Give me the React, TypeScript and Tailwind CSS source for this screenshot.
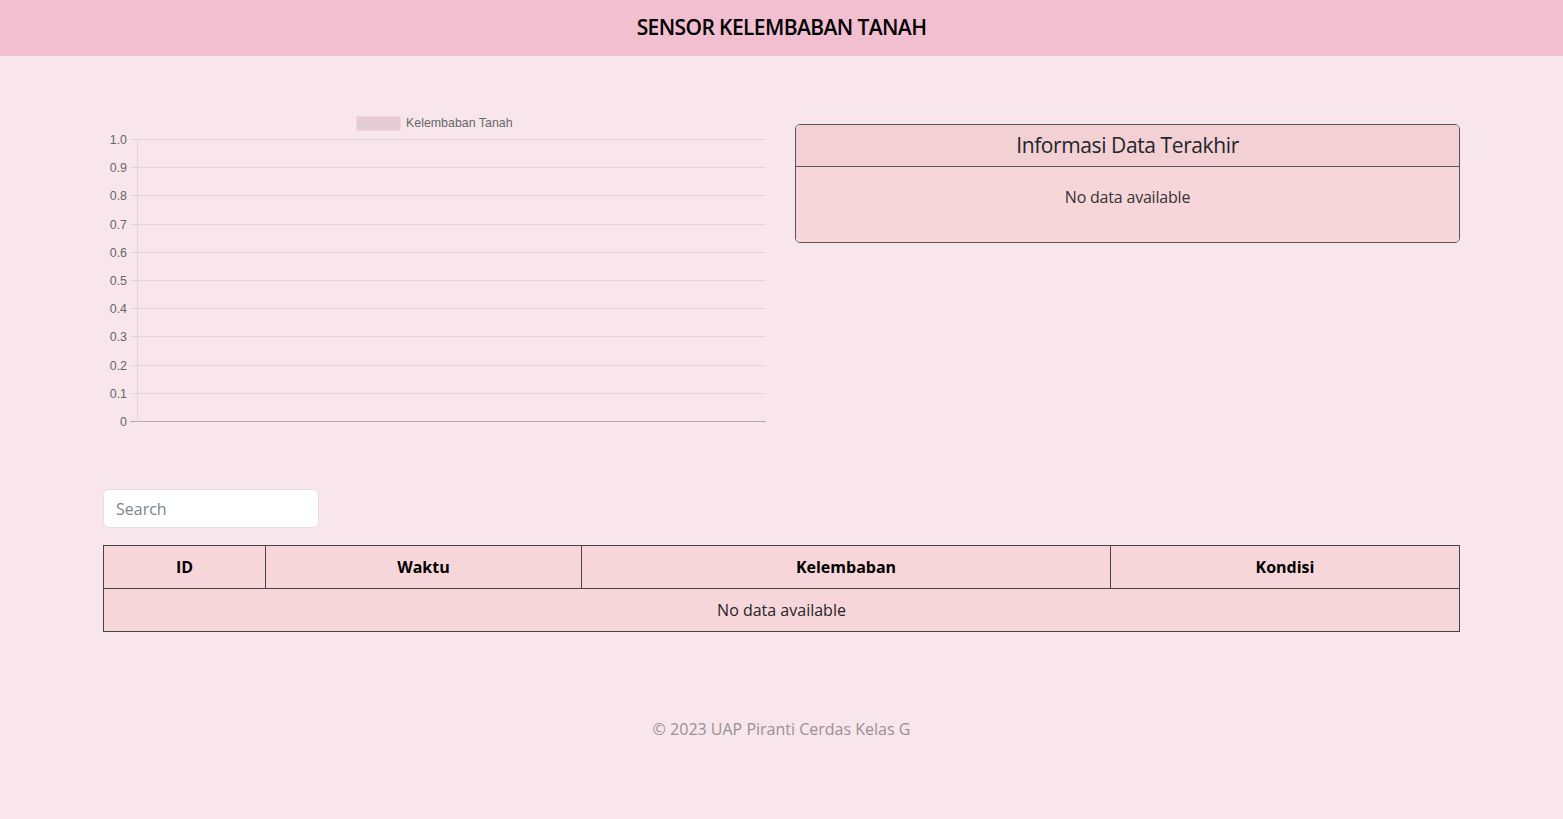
import React from "react";

const ticks = ["1.0", "0.9", "0.8", "0.7", "0.6", "0.5", "0.4", "0.3", "0.2", "0.1", "0"];

function Chart() {
  const top = 140 - 110;
  const step = 28.2;
  return (
    <svg width="663" height="320" className="block" style={{ fontFamily: "'Liberation Sans', Arial, sans-serif" }}>
      <rect x={357 - 103} y={117 - 110} width={43} height={13} fill="#e3ccd3" stroke="#f2c6d2" strokeWidth={1} />
      <text x={406 - 103} y={127 - 110} fontSize="12.4" fill="#666">Kelembaban Tanah</text>
      {ticks.map((t, i) => {
        const y = Math.round(top + i * step) - 0.5;
        const last = i === ticks.length - 1;
        return (
          <g key={t}>
            <line x1={27} x2={663} y1={y} y2={y} stroke={last ? "#b7a8ad" : "#e6d3d9"} strokeWidth={1} />
            <text x={24} y={y + 4} fontSize="12.4" fill="#666" textAnchor="end">{t}</text>
          </g>
        );
      })}
      <line x1={34.5} x2={34.5} y1={top - 0.5} y2={Math.round(top + 10 * step) - 0.5} stroke="#e6d3d9" strokeWidth={1} />
    </svg>
  );
}

export default function App() {
  const font = { fontFamily: "'Segoe UI', 'Open Sans', 'Noto Sans', sans-serif" };
  return (
    <div className="min-h-[819px] bg-[#f8e6ec] text-[#212529]" style={font}>
      <header className="h-[56px] bg-[#f2bfd1] flex items-center justify-center">
        <h1 className="text-[21px] font-semibold text-black tracking-[-0.6px]">SENSOR KELEMBABAN TANAH</h1>
      </header>
      <main className="px-[103px] pt-[54px]">
        <div className="flex gap-[29px]">
          <div className="w-[663px]">
            <Chart />
          </div>
          <div className="flex-1 pt-[14px]">
            <div className="border border-[#555] rounded-[5px] overflow-hidden">
              <div className="h-[42px] bg-[#f2d0d4] border-b border-[#555] flex items-center justify-center">
                <h2 className="text-[21px] font-medium text-[#212529] tracking-[-0.4px]">Informasi Data Terakhir</h2>
              </div>
              <div className="h-[75px] bg-[#f7d6da] flex justify-center pt-[18px]">
                <p className="text-[16px] text-[#333] tracking-[-0.2px]">No data available</p>
              </div>
            </div>
          </div>
        </div>
        <div className="mt-[59px]">
          <input
            placeholder="Search"
            className="w-[216px] h-[39px] bg-white rounded-[6px] border border-[#eadde1] px-[12px] text-[16px] placeholder:text-[#7d848a] outline-none"
          />
        </div>
        <table className="mt-[17px] w-full border-collapse border border-[#444] bg-[#f7d6da] text-[16px]">
          <thead>
            <tr className="h-[43px]">
              <th className="w-[162px] border border-[#444] font-bold text-black">ID</th>
              <th className="w-[316px] border border-[#444] font-bold text-black">Waktu</th>
              <th className="w-[529px] border border-[#444] font-bold text-black">Kelembaban</th>
              <th className="border border-[#444] font-bold text-black">Kondisi</th>
            </tr>
          </thead>
          <tbody>
            <tr className="h-[43px]">
              <td colSpan={4} className="text-center text-[#212529] border border-[#444]">No data available</td>
            </tr>
          </tbody>
        </table>
        <footer className="mt-[85px] text-center text-[16px] text-[#9a8f93]">© 2023 UAP Piranti Cerdas Kelas G</footer>
      </main>
    </div>
  );
}
